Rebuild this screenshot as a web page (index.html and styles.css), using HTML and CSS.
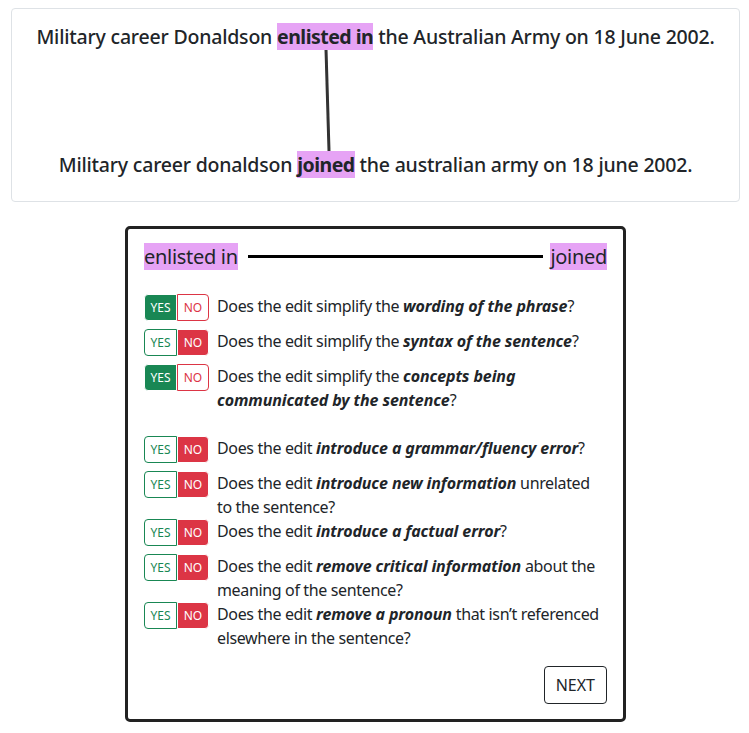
FILE: index.html
```html
<!DOCTYPE html>
<html>
<head>
<meta charset="utf-8">
<link rel="stylesheet" href="styles.css">
</head>
<body>
<div class="page">
  <div class="card">
    <svg class="link" width="727" height="192" viewBox="0 0 727 192">
      <line x1="314" y1="40" x2="317" y2="142" stroke="#333" stroke-width="3"/>
    </svg>
    <div class="sentence">Military career Donaldson <span class="hl">enlisted in</span> the Australian Army on 18 June 2002.</div>
    <div class="sentence second">Military career donaldson <span class="hl">joined</span> the australian army on 18 june 2002.</div>
  </div>

  <div class="box">
    <div class="pair">
      <span class="tag">enlisted in</span>
      <span class="rule"></span>
      <span class="tag">joined</span>
    </div>

    <div class="group">
      <div class="row">
        <div class="toggle"><span class="yes on">YES</span><span class="no">NO</span></div>
        <div class="q">Does the edit simplify the <b><i>wording of the phrase</i></b>?</div>
      </div>
      <div class="row">
        <div class="toggle"><span class="yes">YES</span><span class="no on">NO</span></div>
        <div class="q">Does the edit simplify the <b><i>syntax of the sentence</i></b>?</div>
      </div>
      <div class="row">
        <div class="toggle"><span class="yes on">YES</span><span class="no">NO</span></div>
        <div class="q">Does the edit simplify the <b><i>concepts being communicated by the sentence</i></b>?</div>
      </div>
    </div>

    <div class="group">
      <div class="row">
        <div class="toggle"><span class="yes">YES</span><span class="no on">NO</span></div>
        <div class="q">Does the edit <b><i>introduce a grammar/fluency error</i></b>?</div>
      </div>
      <div class="row">
        <div class="toggle"><span class="yes">YES</span><span class="no on">NO</span></div>
        <div class="q">Does the edit <b><i>introduce new information</i></b> unrelated to the sentence?</div>
      </div>
      <div class="row">
        <div class="toggle"><span class="yes">YES</span><span class="no on">NO</span></div>
        <div class="q">Does the edit <b><i>introduce a factual error</i></b>?</div>
      </div>
      <div class="row">
        <div class="toggle"><span class="yes">YES</span><span class="no on">NO</span></div>
        <div class="q">Does the edit <b><i>remove critical information</i></b> about the meaning of the sentence?</div>
      </div>
      <div class="row">
        <div class="toggle"><span class="yes">YES</span><span class="no on">NO</span></div>
        <div class="q">Does the edit <b><i>remove a pronoun</i></b> that isn’t referenced elsewhere in the sentence?</div>
      </div>
    </div>

    <div class="actions">
      <button class="next">NEXT</button>
    </div>
  </div>
</div>
</body>
</html>
```

FILE: styles.css
```css
* { box-sizing: border-box; }
body {
  margin: 0;
  font-family: "Noto Sans", "Open Sans", sans-serif;
  color: #212529;
  background: #fff;
}
.page {
  padding: 8px 9px 0 11px;
}
.card {
  position: relative;
  border: 1px solid #dee2e6;
  border-radius: 4px;
  padding: 14px 0 23px;
}
.link {
  position: absolute;
  left: 0;
  top: 0;
}
.sentence {
  position: relative;
  text-align: center;
  font-size: 19.5px;
  font-weight: 500;
  line-height: 27px;
  letter-spacing: -0.2px;
}
.sentence.second {
  margin-top: 101px;
}
.hl, .tag {
  background: #e6a3f5;
}
.sentence .hl {
  font-weight: 700;
  letter-spacing: -0.5px;
}

.box {
  width: 501px;
  margin: 24px auto 0;
  border: 3px solid #222;
  border-radius: 5px;
  padding: 14px 16px 15px;
}
.pair {
  display: flex;
  align-items: center;
  font-size: 20px;
  line-height: 27px;
  letter-spacing: -0.3px;
}
.rule {
  flex: 1;
  height: 3px;
  background: #000;
  margin: 0 7px 0 10px;
}
.group {
  margin-top: 24px;
}
.row {
  display: flex;
  align-items: flex-start;
}
.toggle {
  display: flex;
  flex: none;
  height: 27px;
  margin-bottom: 8px;
  font-size: 12px;
  line-height: 25px;
}
.toggle span {
  display: block;
  border: 1px solid;
  text-align: center;
}
.yes {
  width: 33px;
  color: #198754;
  border-color: #198754;
  border-radius: 4px 0 0 4px;
  background: #fff;
}
.no {
  width: 32px;
  color: #dc3545;
  border-color: #dc3545;
  border-radius: 0 4px 4px 0;
  background: #fff;
}
.yes.on { background: #198754; color: #fff; }
.no.on { background: #dc3545; color: #fff; }
.q {
  margin-left: 8px;
  font-size: 16px;
  line-height: 24px;
  letter-spacing: -0.35px;
}
.q b {
  letter-spacing: -0.1px;
}
.actions {
  display: flex;
  justify-content: flex-end;
  margin-top: 16px;
}
.next {
  font-family: inherit;
  font-size: 16px;
  line-height: 24px;
  padding: 6px 11px;
  border: 1px solid #212529;
  border-radius: 4px;
  background: #fff;
  color: #212529;
}
```
